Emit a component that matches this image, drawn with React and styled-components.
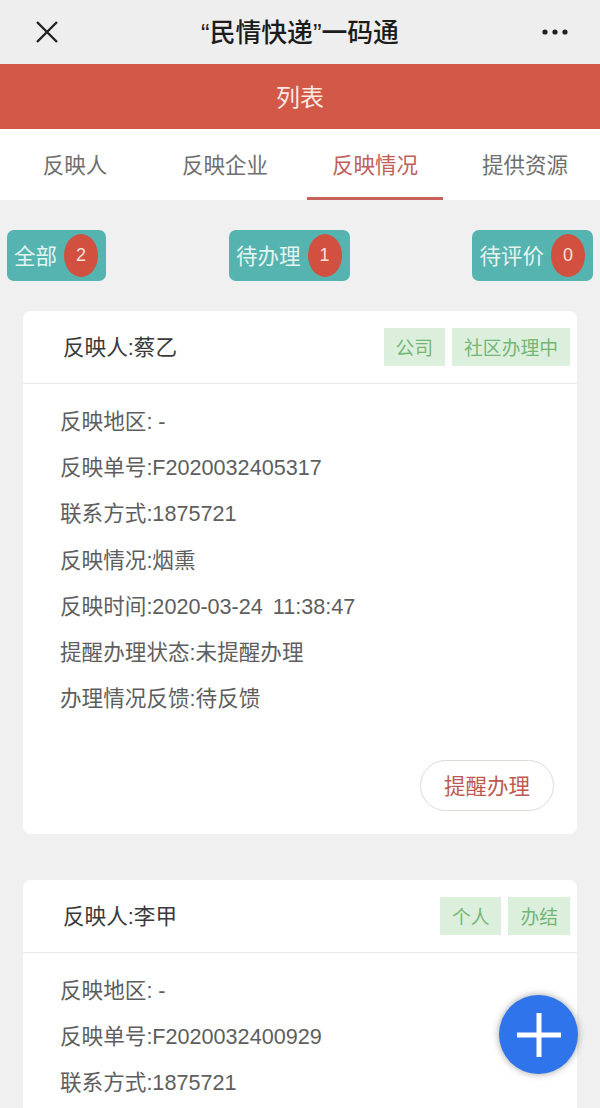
import React from "react";
import styled, { createGlobalStyle } from "styled-components";

const Global = createGlobalStyle`
  html, body { margin: 0; padding: 0; background: #f0f0f0; }
  body { font-family: "Liberation Sans", "Noto Sans CJK SC", sans-serif; }
  * { box-sizing: border-box; }
`;

const Page = styled.div`
  width: 600px;
  height: 1108px;
  overflow: hidden;
  position: relative;
  background: #f0f0f0;
`;

const NavBar = styled.div`
  height: 64px;
  background: #eeeeee;
  display: flex;
  align-items: center;
  justify-content: space-between;
  padding: 0 32px 0 30px;
`;

const NavIcon = styled.svg`
  display: block;
  flex: none;
`;

const NavTitle = styled.div`
  font-size: 25.8px;
  font-weight: 500;
  color: #1c1c1c;
  white-space: nowrap;
  padding: 0 6px 4px 0;
`;

const Header = styled.div`
  height: 65px;
  background: #d25848;
  color: #fbe9e4;
  font-size: 24px;
  padding-bottom: 2px;
  display: flex;
  align-items: center;
  justify-content: center;
`;

const Tabs = styled.div`
  height: 71px;
  background: #fff;
  display: grid;
  grid-template-columns: 150px 150px 150px 150px;
`;

const Tab = styled.div`
  display: flex;
  align-items: center;
  justify-content: center;
  padding-bottom: 3px;
  font-size: 21.5px;
  color: ${(p) => (p.$active ? "#c0605a" : "#6f6f6f")};
  position: relative;
  &::after {
    content: "";
    display: ${(p) => (p.$active ? "block" : "none")};
    position: absolute;
    left: 7px;
    right: 7px;
    bottom: 0;
    height: 3px;
    background: #c9605a;
  }
`;

const Filters = styled.div`
  display: flex;
  justify-content: space-between;
  padding: 30px 7px 30px 7px;
`;

const Filter = styled.div`
  height: 51px;
  background: #55b3b0;
  border-radius: 7px;
  display: flex;
  align-items: center;
  gap: 7px;
  padding: 0 8px 0 7px;
  color: #e4f4f1;
  font-size: 21.5px;
`;

const FilterLabel = styled.span`
  padding-bottom: 3px;
`;

const Count = styled.div`
  width: 34px;
  height: 43px;
  border-radius: 50%;
  background: #d2503f;
  color: #f6e2da;
  font-size: 18px;
  display: flex;
  align-items: center;
  justify-content: center;
`;

const CardList = styled.div`
  display: flex;
  flex-direction: column;
  gap: 46px;
  padding: 0 23px;
`;

const Card = styled.div`
  background: #fff;
  border-radius: 8px;
`;

const CardHead = styled.div`
  height: 73px;
  border-bottom: 1px solid #e9e9e9;
  display: flex;
  align-items: center;
  padding: 0 7px 0 40px;
`;

const Reporter = styled.div`
  font-size: 21.6px;
  color: #3a3a3a;
  margin-right: auto;
  padding-bottom: 3px;
`;

const Tags = styled.div`
  display: flex;
  gap: 7px;
`;

const Tag = styled.div`
  height: 38px;
  padding: 0 12px 2px;
  background: #dcefdc;
  color: #74b676;
  font-size: 18.8px;
  display: flex;
  align-items: center;
`;

const CardBody = styled.div`
  padding: 12px 23px ${(p) => (p.$tail ? 40 : 0)}px 37px;
`;

const Line = styled.div`
  height: 46.3px;
  display: flex;
  align-items: center;
  font-size: 21.6px;
  color: #5e5e5e;
  white-space: pre;
  word-spacing: ${(p) => (p.$wide ? 4 : 0)}px;
`;

const Actions = styled.div`
  display: flex;
  justify-content: flex-end;
  padding: 40px 0 23px;
`;

const Remind = styled.div`
  width: 134px;
  height: 51px;
  border: 1px solid #dedad6;
  border-radius: 26px;
  color: #bd5a50;
  font-size: 21.5px;
  padding-bottom: 2px;
  display: flex;
  align-items: center;
  justify-content: center;
`;

const Fab = styled.div`
  position: absolute;
  left: 499px;
  top: 995px;
  width: 79px;
  height: 79px;
  border-radius: 50%;
  background: #2f74ea;
  box-shadow: 0 0 7px rgba(60, 60, 60, 0.5);
  display: flex;
  align-items: center;
  justify-content: center;
`;

const cards = [
  {
    name: "蔡乙",
    tags: ["公司", "社区办理中"],
    lines: ["反映地区: -", "反映单号:F2020032405317", "联系方式:1875721", "反映情况:烟熏", "反映时间:2020-03-24 11:38:47", "提醒办理状态:未提醒办理", "办理情况反馈:待反馈"],
    remind: true,
  },
  {
    name: "李甲",
    tags: ["个人", "办结"],
    lines: ["反映地区: -", "反映单号:F2020032400929", "联系方式:1875721"],
  },
];

export default function App() {
  return (
    <Page>
      <Global />
      <NavBar>
        <NavIcon width="34" height="34" viewBox="0 0 34 34">
          <path d="M7 7 L27 27 M27 7 L7 27" stroke="#222" strokeWidth="2.4" fill="none" />
        </NavIcon>
        <NavTitle>“民情快递”一码通</NavTitle>
        <NavIcon width="26" height="8" viewBox="0 0 26 8">
          <circle cx="3" cy="4" r="2.6" fill="#222" />
          <circle cx="13" cy="4" r="2.6" fill="#222" />
          <circle cx="23" cy="4" r="2.6" fill="#222" />
        </NavIcon>
      </NavBar>
      <Header>列表</Header>
      <Tabs>
        <Tab>反映人</Tab>
        <Tab>反映企业</Tab>
        <Tab $active>反映情况</Tab>
        <Tab>提供资源</Tab>
      </Tabs>
      <Filters>
        <Filter><FilterLabel>全部</FilterLabel><Count>2</Count></Filter>
        <Filter><FilterLabel>待办理</FilterLabel><Count>1</Count></Filter>
        <Filter><FilterLabel>待评价</FilterLabel><Count>0</Count></Filter>
      </Filters>
      <CardList>
        {cards.map((c) => (
          <Card key={c.name}>
            <CardHead>
              <Reporter>反映人:{c.name}</Reporter>
              <Tags>
                {c.tags.map((t) => (
                  <Tag key={t}>{t}</Tag>
                ))}
              </Tags>
            </CardHead>
            <CardBody $tail={!c.remind}>
              {c.lines.map((l) => (
                <Line key={l} $wide={l.includes("时间")}>{l}</Line>
              ))}
              {c.remind && (
                <Actions>
                  <Remind>提醒办理</Remind>
                </Actions>
              )}
            </CardBody>
          </Card>
        ))}
      </CardList>
      <Fab>
        <svg width="46" height="46" viewBox="0 0 46 46">
          <path d="M23 1 V45 M1 23 H45" stroke="#fff" strokeWidth="5" fill="none" />
        </svg>
      </Fab>
    </Page>
  );
}
